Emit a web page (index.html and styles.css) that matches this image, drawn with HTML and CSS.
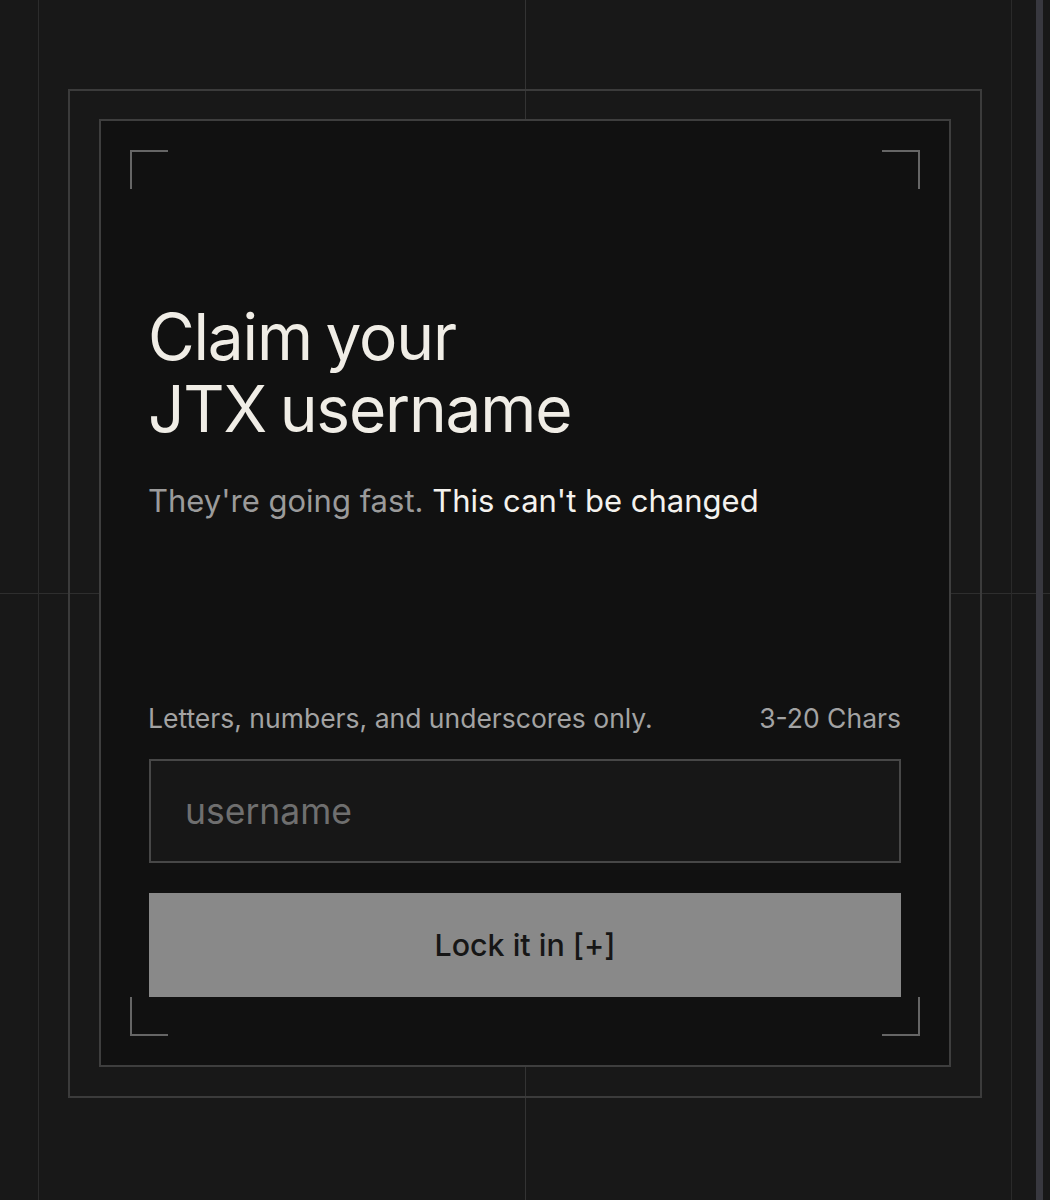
FILE: index.html
```html
<!DOCTYPE html>
<html lang="en">
<head>
<meta charset="utf-8">
<title>Claim your JTX username</title>
<link rel="stylesheet" href="styles.css">
</head>
<body>
<div class="stage">
  <div class="scrollbar"></div>
  <div class="frame">
    <div class="card">
      <span class="corner corner-tl"></span>
      <span class="corner corner-tr"></span>
      <span class="corner corner-bl"></span>
      <span class="corner corner-br"></span>
      <div class="intro">
        <h1 class="title">Claim your<br>JTX username</h1>
        <p class="subtitle"><span class="muted">They're going fast.</span> This can't be changed</p>
      </div>
      <form class="claim">
        <div class="hint">
          <span>Letters, numbers, and underscores only.</span>
          <span>3-20 Chars</span>
        </div>
        <input class="field" type="text" placeholder="username">
        <button class="submit" type="button">Lock it in [+]</button>
      </form>
    </div>
  </div>
</div>
</body>
</html>
```
FILE: styles.css
```css
* { box-sizing: border-box; }
html, body { margin: 0; padding: 0; }
body {
  background: #181818;
  font-family: Inter, "Liberation Sans", Arial, sans-serif;
  overflow: hidden;
}
.stage {
  position: relative;
  width: 1050px;
  height: 1200px;
  padding: 89px 0 0 68px;
  background-color: #181818;
  background-image:
    linear-gradient(#2c2c2c, #2c2c2c),
    linear-gradient(#333333, #333333),
    linear-gradient(#2a2a2a, #2a2a2a),
    linear-gradient(#2e2e2e, #2e2e2e);
  background-size: 1px 100%, 1px 100%, 1px 100%, 100% 1px;
  background-position: 38px 0, 525px 0, 1011px 0, 0 593px;
  background-repeat: no-repeat;
}
.scrollbar {
  position: absolute;
  top: 0;
  left: 1036px;
  width: 7px;
  height: 100%;
  background: #38383f;
}
.frame {
  width: 914px;
  height: 1009px;
  border: 2px solid #3b3b3b;
  padding: 28px 29px;
}
.card {
  position: relative;
  height: 948px;
  background: #111111;
  border: 2px solid #3e3e3e;
  padding: 0 48px 68px 48px;
  display: flex;
  flex-direction: column;
  justify-content: space-between;
}
.corner {
  position: absolute;
  width: 38px;
  height: 39px;
  border: 0 solid #666666;
}
.corner-tl { top: 29px; left: 29px; border-top-width: 2px; border-left-width: 2px; }
.corner-tr { top: 29px; right: 29px; border-top-width: 2px; border-right-width: 2px; }
.corner-bl { bottom: 29px; left: 29px; border-bottom-width: 2px; border-left-width: 2px; }
.corner-br { bottom: 29px; right: 29px; border-bottom-width: 2px; border-right-width: 2px; }

.intro { padding-top: 180px; }
.title {
  margin: 0 0 0 -1px;
  font-size: 64px;
  line-height: 72px;
  font-weight: 400;
  letter-spacing: -1.2px;
  word-spacing: -3px;
  color: #f0ede6;
}
.subtitle {
  margin: 37px 0 0 -1px;
  font-size: 31px;
  line-height: 38px;
  letter-spacing: 0;
  color: #f4f2ee;
}
.muted { color: #9b9b9b; }

.claim {
  display: flex;
  flex-direction: column;
}
.hint {
  display: flex;
  justify-content: space-between;
  margin-left: -1px;
  font-size: 26.5px;
  line-height: 30px;
  color: #a3a3a3;
  margin-bottom: 26px;
}
.field {
  height: 104px;
  background: #171717;
  border: 2px solid #474747;
  padding: 0 34px;
  font-family: inherit;
  font-size: 35.5px;
  color: #eeeeee;
  outline: none;
  margin: 0;
}
.field::placeholder { color: #6f6f6f; }
.submit {
  margin-top: 30px;
  height: 104px;
  border: 0;
  background: #898989;
  color: #161616;
  font-family: inherit;
  font-size: 30.4px;
  font-weight: 500;
}
```
